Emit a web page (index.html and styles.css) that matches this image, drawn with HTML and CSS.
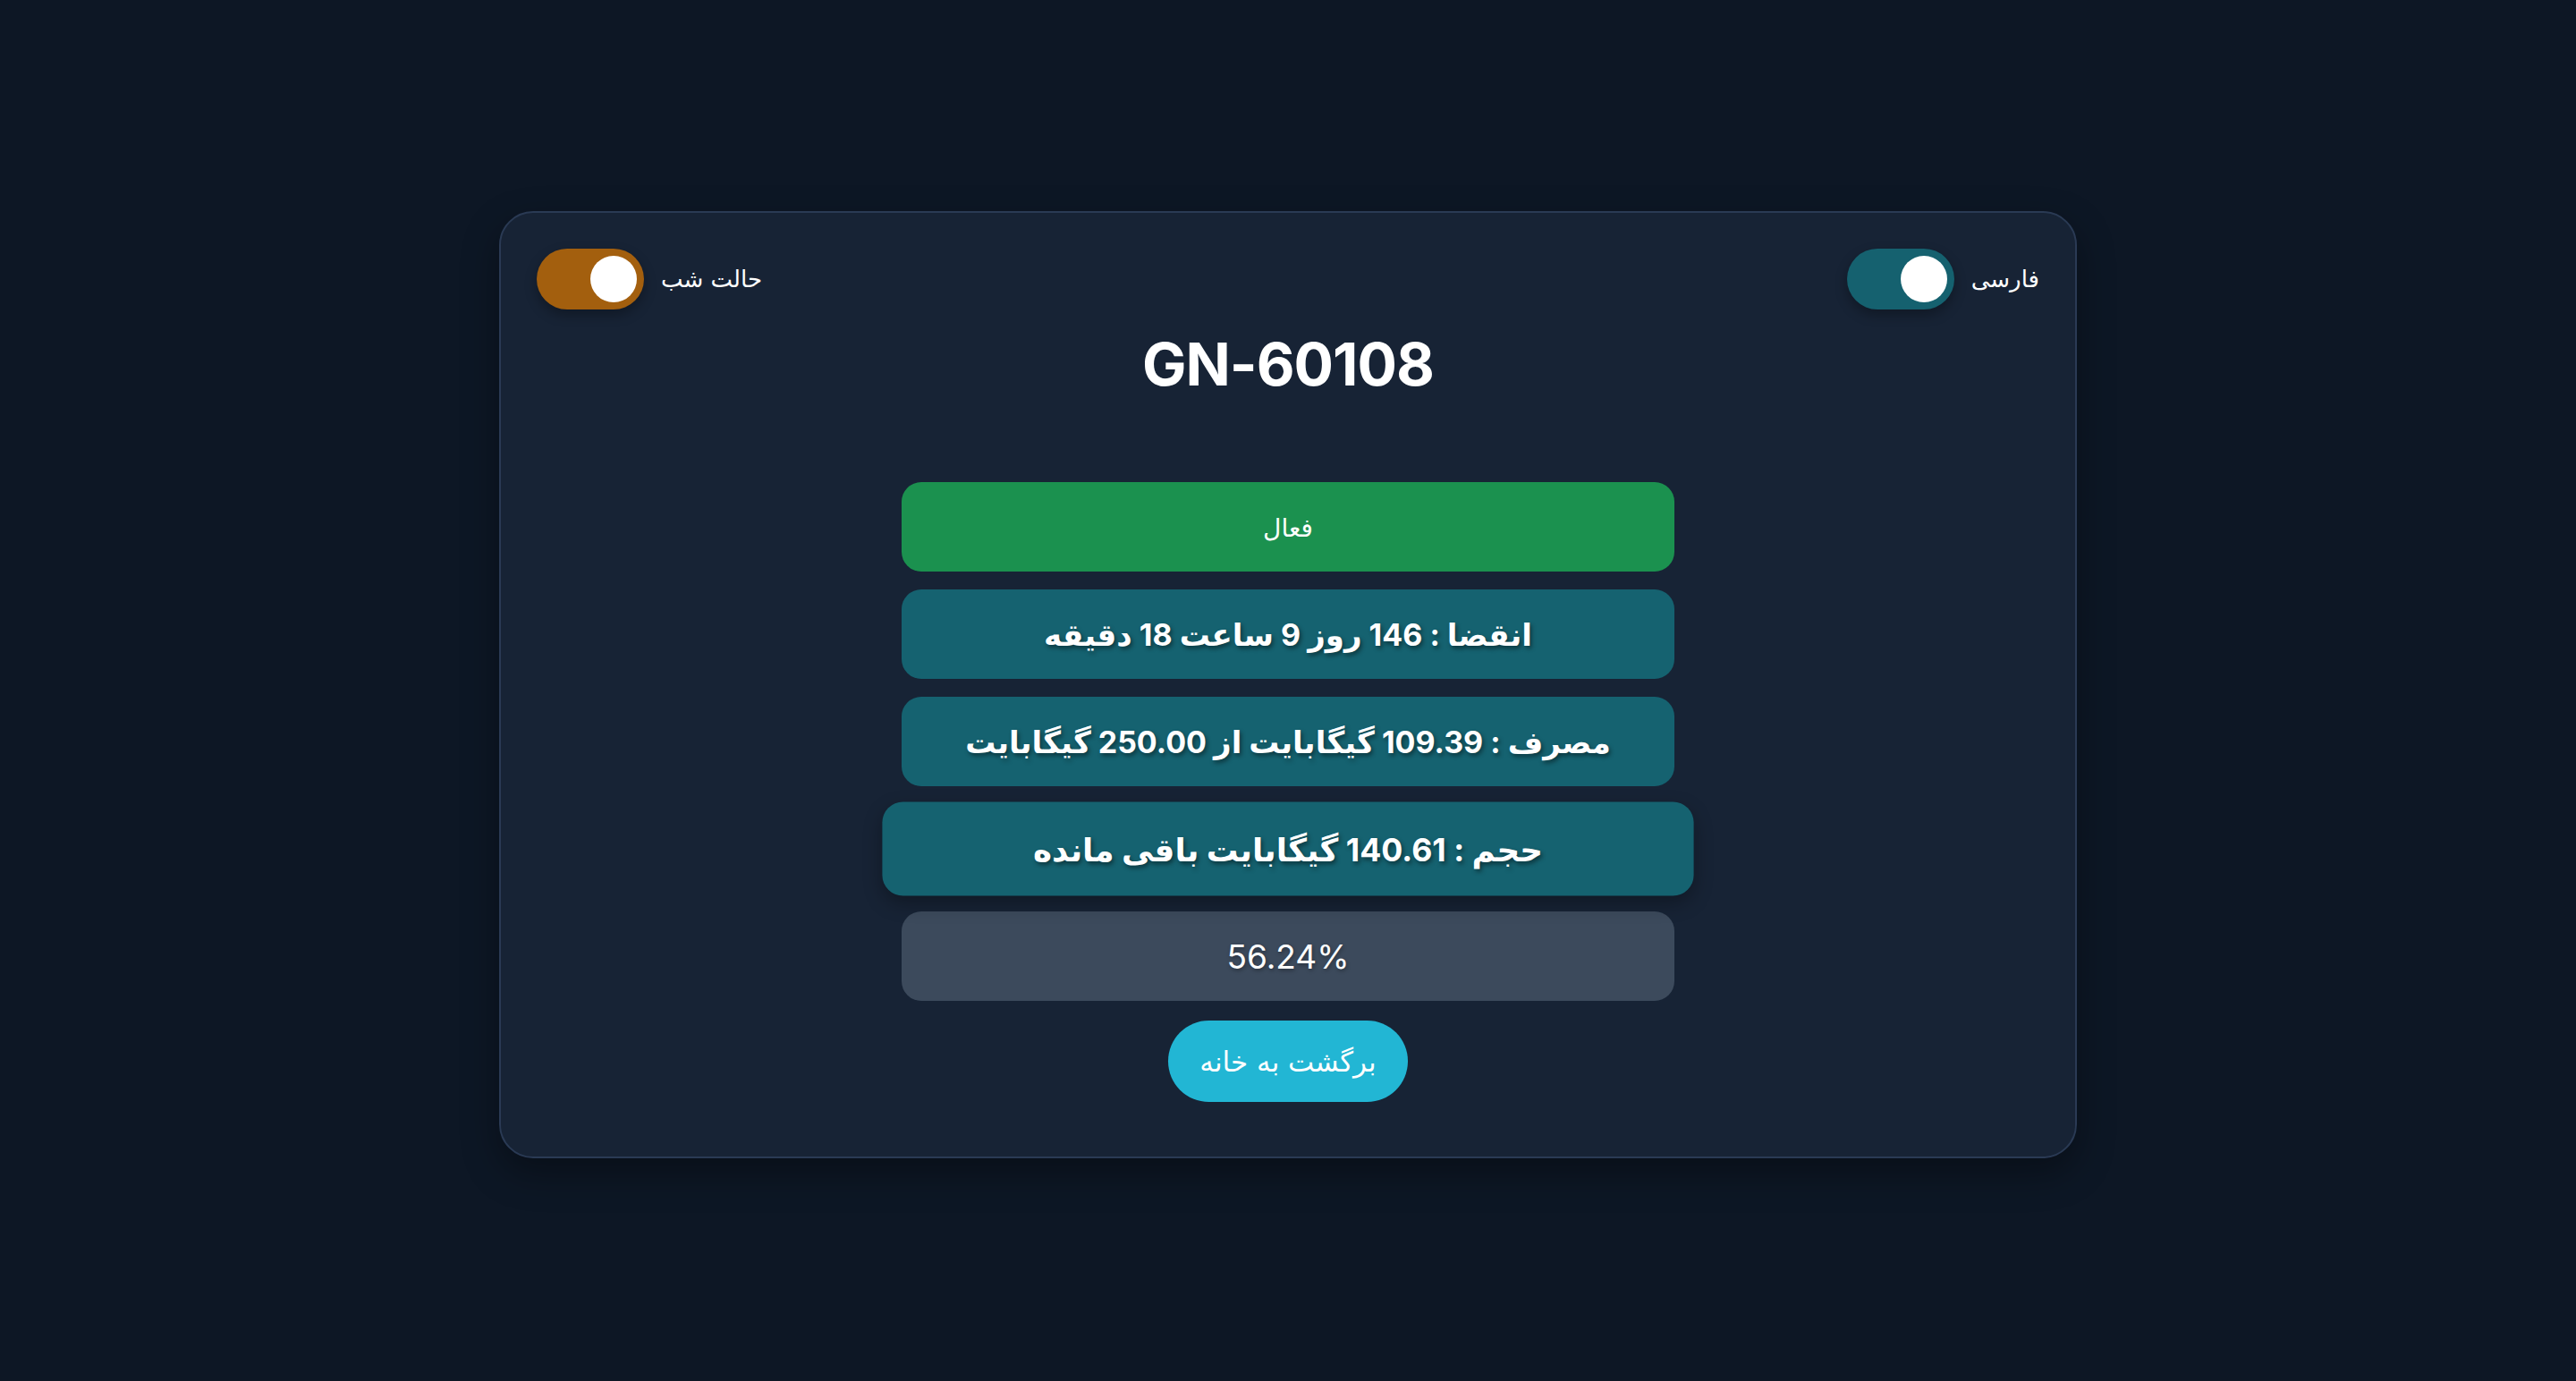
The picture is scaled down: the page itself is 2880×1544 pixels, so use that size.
FILE: index.html
```html
<!DOCTYPE html>
<html lang="fa" dir="rtl">
<head>
<meta charset="utf-8">
<title>GN-60108</title>
<link rel="stylesheet" href="styles.css">
</head>
<body>
<main class="page">
  <section class="card">
    <header class="card-header">
      <div class="toggle-group">
        <span class="toggle-label">فارسی</span>
        <span class="switch switch-teal"><span class="knob"></span></span>
      </div>
      <div class="toggle-group">
        <span class="toggle-label">حالت شب</span>
        <span class="switch switch-orange"><span class="knob"></span></span>
      </div>
    </header>
    <h1 class="title">GN-60108</h1>
    <div class="rows">
      <div class="row row-status">فعال</div>
      <div class="row row-info">انقضا : 146 روز 9 ساعت 18 دقیقه</div>
      <div class="row row-info">مصرف : 109.39 گیگابایت از 250.00 گیگابایت</div>
      <div class="row row-info row-hover">حجم : 140.61 گیگابایت باقی مانده</div>
      <div class="row row-percent">56.24%</div>
    </div>
    <div class="actions">
      <a class="home-btn" href="#">برگشت به خانه</a>
    </div>
  </section>
</main>
</body>
</html>
```

FILE: styles.css
```css
* { box-sizing: border-box; }

html, body {
  margin: 0;
  padding: 0;
}

body {
  background: #0d1725;
  color: #ffffff;
  font-family: "Inter", "DejaVu Sans", sans-serif;
  min-height: 1544px;
}

.page {
  display: flex;
  justify-content: center;
  padding-top: 236px;
}

.card {
  width: 1764px;
  background: #172335;
  border: 2px solid #2a3a54;
  border-radius: 38px;
  padding: 40px 40px 40px;
  box-shadow: 0 16px 40px rgba(0, 0, 0, 0.35);
}

.card-header {
  display: flex;
  justify-content: space-between;
  align-items: center;
  height: 68px;
}

.toggle-group {
  display: flex;
  align-items: center;
  gap: 19px;
}

.toggle-label {
  font-family: "DejaVu Sans", sans-serif;
  font-size: 26px;
  color: #ffffff;
  line-height: 1;
}

.switch {
  direction: ltr;
  display: flex;
  justify-content: flex-end;
  align-items: center;
  width: 120px;
  height: 68px;
  border-radius: 34px;
  padding: 0 8px;
  box-shadow: 0 6px 14px rgba(0, 0, 0, 0.3);
}

.switch-teal { background: #15616f; }
.switch-orange { background: #a35f0e; }

.knob {
  width: 52px;
  height: 52px;
  border-radius: 50%;
  background: #ffffff;
}

.title {
  margin: 19px 0 0;
  text-align: center;
  font-family: "Inter", sans-serif;
  font-weight: 700;
  font-size: 66px;
  line-height: 84px;
  letter-spacing: -1px;
  direction: ltr;
}

.rows {
  margin-top: 90px;
  display: flex;
  flex-direction: column;
  align-items: center;
  gap: 20px;
}

.row {
  width: 864px;
  height: 100px;
  border-radius: 22px;
  display: flex;
  align-items: center;
  justify-content: center;
  color: #ffffff;
}

.row-status {
  background: #1b914f;
  font-family: "DejaVu Sans", sans-serif;
  font-size: 28px;
  padding-top: 2px;
}

.row-info {
  background: #156270;
  font-family: "Inter", "DejaVu Sans", sans-serif;
  font-weight: 700;
  font-size: 34px;
  text-shadow: 2px 3px 5px rgba(0, 0, 0, 0.45);
}

.row-hover {
  transform: scale(1.05);
  box-shadow: 0 8px 20px rgba(0, 0, 0, 0.3);
}

.row-percent {
  background: #3c4a5c;
  font-family: "Inter", sans-serif;
  font-size: 37px;
  text-shadow: 1px 2px 4px rgba(0, 0, 0, 0.35);
}

.actions {
  display: flex;
  justify-content: center;
  margin: 22px 0 21px;
}

.home-btn {
  display: flex;
  align-items: center;
  justify-content: center;
  width: 268px;
  height: 91px;
  border-radius: 46px;
  background: #22b6d4;
  color: #ffffff;
  text-decoration: none;
  font-family: "DejaVu Sans", sans-serif;
  font-size: 31px;
}
```
